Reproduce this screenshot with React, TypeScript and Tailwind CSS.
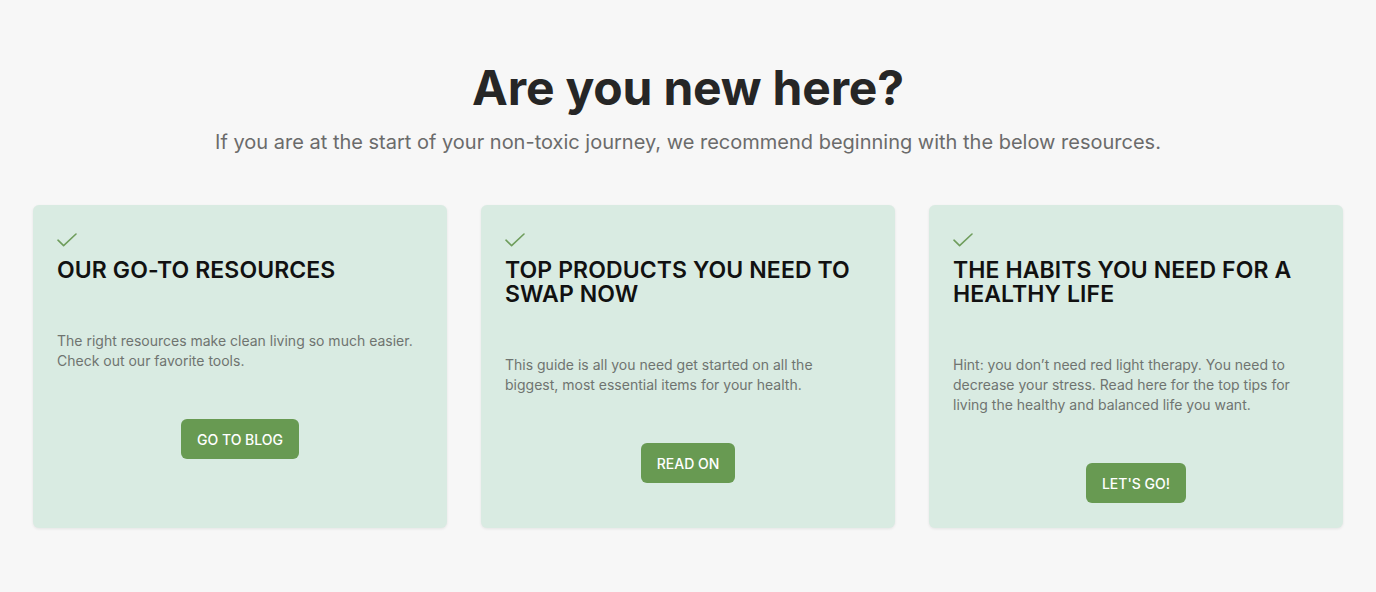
import React from "react";

const cards = [
  {
    title: "OUR GO-TO RESOURCES",
    text: "The right resources make clean living so much easier. Check out our favorite tools.",
    cta: "GO TO BLOG",
  },
  {
    title: "TOP PRODUCTS YOU NEED TO SWAP NOW",
    text: "This guide is all you need get started on all the biggest, most essential items for your health.",
    cta: "READ ON",
  },
  {
    title: "THE HABITS YOU NEED FOR A HEALTHY LIFE",
    text: "Hint: you don\u2019t need red light therapy. You need to decrease your stress. Read here for the top tips for living the healthy and balanced life you want.",
    cta: "LET'S GO!",
  },
];

const CheckMark = () => (
  <svg width="20" height="14" viewBox="0 0 20 14" fill="none" className="block">
    <path d="M1 7.2 6.6 12.6 19 1" stroke="#6f9d5c" strokeWidth={1.6} strokeLinecap="round" strokeLinejoin="round" />
  </svg>
);

export default function App() {
  return (
    <main className="min-h-[592px] bg-[#f7f7f7] pt-16 pb-16 font-['Inter',sans-serif]">
      {/* Header */}
      <div className="text-center">
        <h1 className="text-[48px] leading-[48px] font-bold text-[#262626] tracking-[-0.2px]">
          Are you new here?
        </h1>
        <p className="mt-4 text-[20px] leading-[28px] text-[#6b6b6b]">
          If you are at the start of your non-toxic journey, we recommend beginning with the below resources.
        </p>
      </div>

      {/* Cards */}
      <div className="mt-[49px] px-[33px] grid grid-cols-3 gap-[34px]">
        {cards.map((card, index) => (
          <div
            key={index}
            className="bg-[#d9ebe2] rounded-md shadow-[0_1px_3px_rgba(0,0,0,0.08)] px-6 pt-7 pb-[25px] flex flex-col"
          >
            <CheckMark />
            <h3 className="mt-[11px] text-[23px] leading-[24px] font-semibold tracking-[0.1px] text-[#111111]">
              {card.title}
            </h3>
            <p className="mt-[49px] pr-2 text-[14px] leading-[20px] text-[#6f7470]">{card.text}</p>
            <div className="mt-12 flex justify-center">
              <a
                href="#"
                className="h-10 px-4 flex items-center rounded-md bg-[#689a52] text-white text-[14px] font-medium"
              >
                {card.cta}
              </a>
            </div>
          </div>
        ))}
      </div>
    </main>
  );
}
